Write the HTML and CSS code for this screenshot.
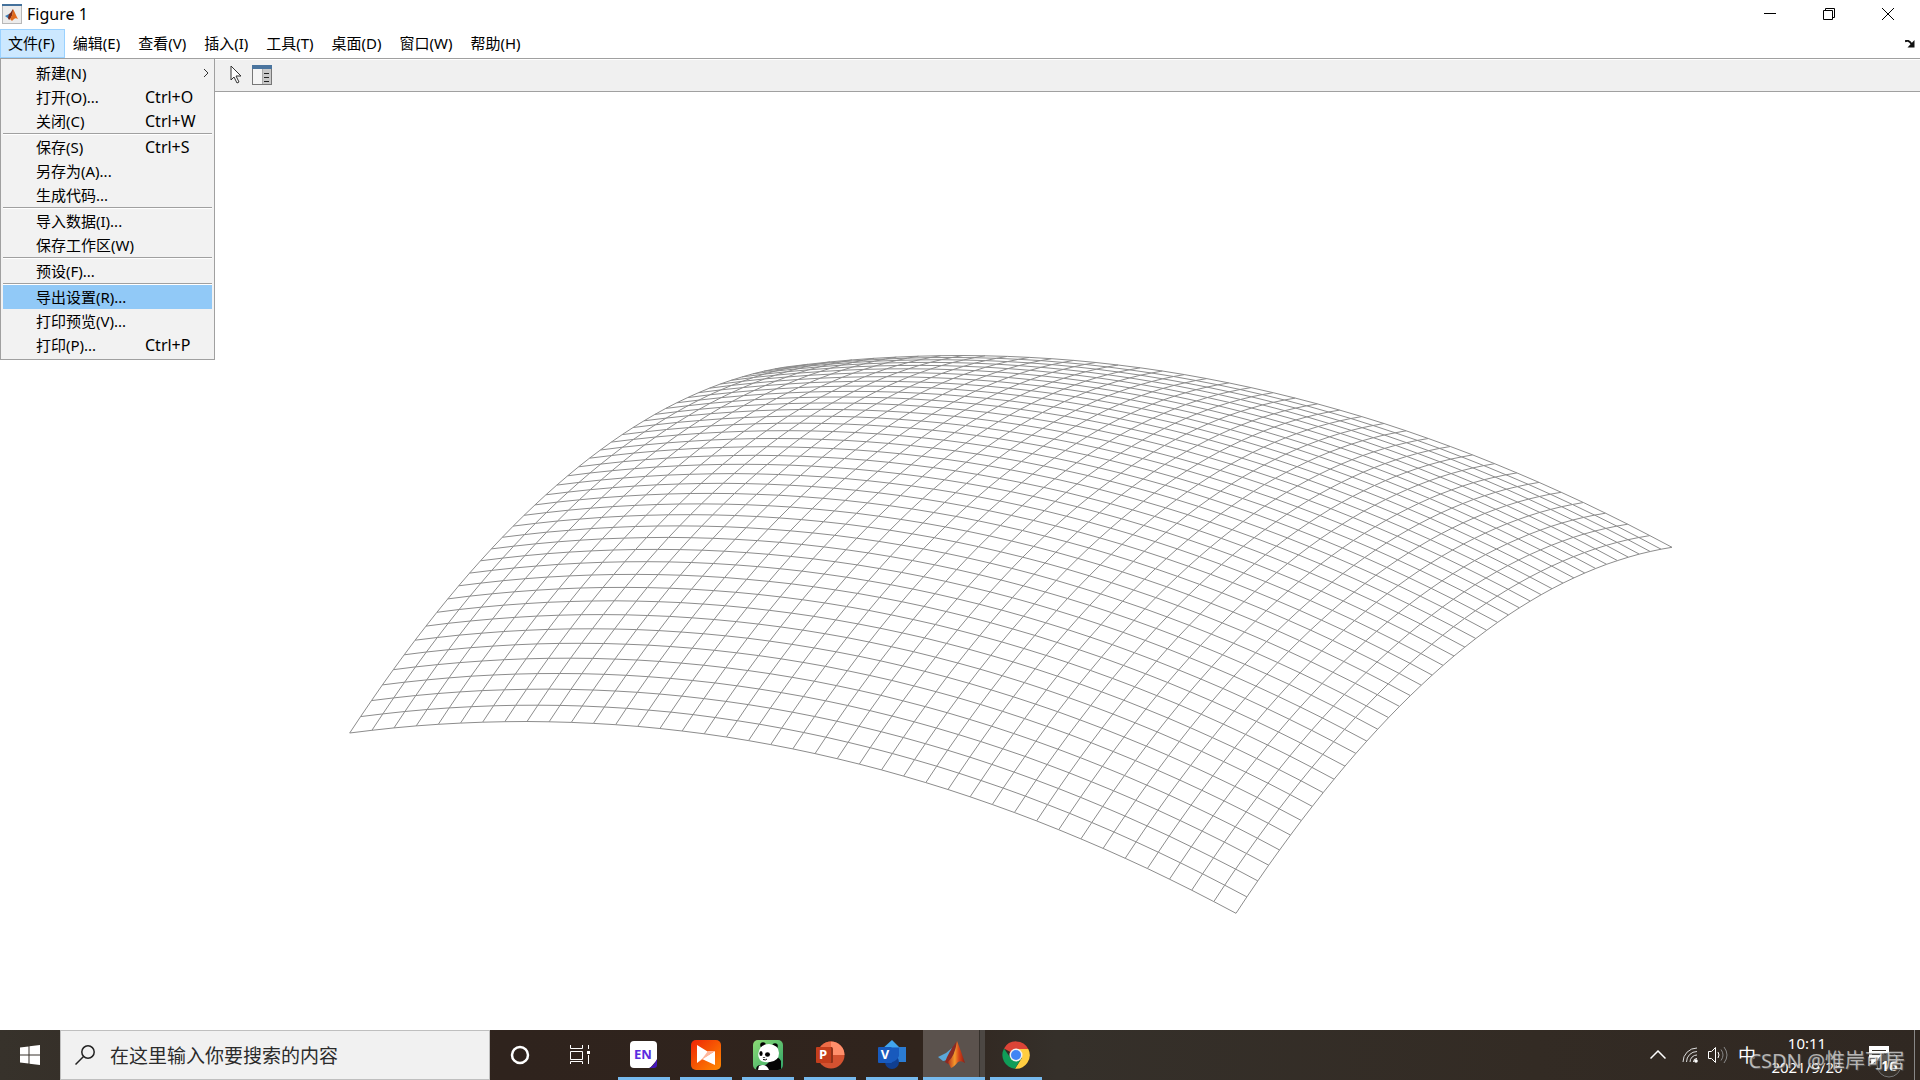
FILE: index.html
```html
<!DOCTYPE html>
<html lang="zh-CN">
<head>
<meta charset="utf-8">
<title>Figure 1</title>
<link rel="stylesheet" href="styles.css">
</head>
<body>
<div class="desktop">
  <header class="titlebar">
    <svg class="title-icon" width="20" height="20" viewBox="0 0 20 20" aria-hidden="true">
      <rect x=".5" y=".5" width="19" height="19" fill="#ececec" stroke="#b8b8b8"/>
      <rect width="20" height="2" fill="#44719b"/>
      <path d="M3 12l4-2 3 1-3 4z" fill="#3c7fb8"/>
      <path d="M7 10c2-1 3-4 4-5 0 4-1 9-4 11L6 14z" fill="#7d2a17"/>
      <path d="M11 5c2 3 3 7 5 10-3-2-4 0-6 2l-2-2c2-3 3-6 3-10z" fill="#e06a1c"/>
    </svg>
    <h1 class="title">Figure 1</h1>
    <div class="window-buttons">
      <button class="window-button" aria-label="最小化"><svg width="12" height="12"><path d="M0 5.500h12" stroke="#000"/></svg></button>
      <button class="window-button" aria-label="还原"><svg width="12" height="12" fill="none" stroke="#000"><path d="M.5 2.500h9v9h-9zM2.500 2.500v-2h9v9h-2"/></svg></button>
      <button class="window-button" aria-label="关闭"><svg width="12" height="12"><path d="M0 0l12 12M12 0L0 12" stroke="#000"/></svg></button>
    </div>
  </header>

  <nav class="menubar" aria-label="菜单栏">
    <button class="menubar-item open">文件(F)</button>
    <button class="menubar-item">编辑(E)</button>
    <button class="menubar-item">查看(V)</button>
    <button class="menubar-item">插入(I)</button>
    <button class="menubar-item">工具(T)</button>
    <button class="menubar-item">桌面(D)</button>
    <button class="menubar-item">窗口(W)</button>
    <button class="menubar-item">帮助(H)</button>
    <button class="dock-button" aria-label="停靠"><svg width="10" height="8" viewBox="0 0 10 8"><path d="M0 1.500c2-1.500 4-1 7 3" stroke="#111" stroke-width="2" fill="none"/><path d="M9.500 0v7.500H2.500z" fill="#111"/></svg></button>
  </nav>

  <div class="toolbar-row">
    <div class="toolbar">
      <button class="tool" aria-label="编辑绘图">
        <svg width="12" height="20" viewBox="0 0 12 20"><path d="M1 1v14l3-3 3 6 2-1-3-6h5z" fill="#fff" stroke="#333"/></svg>
      </button>
      <button class="tool" aria-label="属性检查器">
        <svg width="20" height="20" viewBox="0 0 20 20"><rect x=".5" y=".5" width="19" height="19" fill="#f5f5f5" stroke="#777"/><rect width="20" height="4" fill="#4a749e"/><path d="M10 4h9v15h-9z" fill="#c9c9c9"/><path d="M10.500 4v15" stroke="#aaa"/><path d="M12 8.500h5M12 12.500h5M12 16.500h5" stroke="#222"/></svg>
      </button>
    </div>
    <div class="menu" role="menu">
      <button class="menu-item" role="menuitem"><span>新建(N)</span><svg class="submenu-arrow" width="6" height="10"><path d="M1 1l4 4-4 4" fill="none" stroke="#333"/></svg></button>
      <button class="menu-item" role="menuitem"><span>打开(O)...</span><span class="shortcut">Ctrl+O</span></button>
      <button class="menu-item" role="menuitem"><span>关闭(C)</span><span class="shortcut">Ctrl+W</span></button>
      <hr class="menu-separator">
      <button class="menu-item" role="menuitem"><span>保存(S)</span><span class="shortcut">Ctrl+S</span></button>
      <button class="menu-item" role="menuitem"><span>另存为(A)...</span></button>
      <button class="menu-item" role="menuitem"><span>生成代码...</span></button>
      <hr class="menu-separator">
      <button class="menu-item" role="menuitem"><span>导入数据(I)...</span></button>
      <button class="menu-item" role="menuitem"><span>保存工作区(W)</span></button>
      <hr class="menu-separator">
      <button class="menu-item" role="menuitem"><span>预设(F)...</span></button>
      <hr class="menu-separator">
      <button class="menu-item selected" role="menuitem"><span>导出设置(R)...</span></button>
      <button class="menu-item" role="menuitem"><span>打印预览(V)...</span></button>
      <button class="menu-item" role="menuitem"><span>打印(P)...</span><span class="shortcut">Ctrl+P</span></button>
    </div>
  </div>

  <main class="figure">
    <svg class="plot" viewBox="0 92 1920 938" role="img" aria-label="曲面网格"><path id="mesh" class="mesh"/></svg>
  </main>

  <footer class="taskbar">
    <button class="start" aria-label="开始"><svg width="20" height="20" viewBox="0 0 20 20" fill="#fff"><path d="M0 2.500l8.500-1V9.500H0zM9.500 1.300L20 0v9.500H9.500zM0 10.500h8.500v8L0 17.500zM9.500 10.500H20V20l-10.500-1.300z"/></svg></button>
    <label class="search">
      <svg width="20" height="20" viewBox="0 0 20 20" fill="none" stroke="#222" stroke-width="1.500"><circle cx="13" cy="7" r="6.200"/><path d="M8.500 11.500L.5 19.500"/></svg>
      <input class="search-input" type="text" placeholder="在这里输入你要搜索的内容" aria-label="搜索">
    </label>
    <button class="shell-button" aria-label="Cortana"><svg width="20" height="20"><circle cx="10" cy="10" r="8" fill="none" stroke="#fff" stroke-width="2.500"/></svg></button>
    <button class="shell-button" aria-label="任务视图"><svg width="20" height="20" viewBox="0 0 20 20" fill="none" stroke="#fff"><path d="M.5 0v3.500h12V0M.5 6.500h12v8H.5zM.5 19v-2.500h12V19M18.500 0v4M18.500 10v9"/><path d="M17 6h3v3h-3z" fill="#fff" stroke="none"/></svg></button>
    <div class="apps">
      <button class="app" aria-label="EN">
        <svg width="30" height="30" viewBox="0 0 30 30"><path d="M5 1h19q4 0 4 4v15l-7 8H5q-4 0-4-4V5q0-4 4-4z" fill="#fff"/><path d="M28 19v6q0 3-3 3h-5q5-2 8-9z" fill="#4316b8"/><text x="14" y="19" class="icon-text en">EN</text></svg>
      </button>
      <button class="app" aria-label="视频">
        <svg width="30" height="30" viewBox="0 0 30 30"><defs><linearGradient id="orange" x2="1" y2="1"><stop stop-color="#ee2506"/><stop offset="1" stop-color="#ff8a00"/></linearGradient></defs><rect width="30" height="30" rx="5" fill="url(#orange)"/><path d="M6 5l13 8-13 10z" fill="#fff"/><path d="M24 11v14L11 19z" fill="#fff"/><path d="M24 11l-18 12 5-4 6-8z" fill="#ffb79c"/></svg>
      </button>
      <button class="app" aria-label="熊猫">
        <svg width="30" height="30" viewBox="0 0 30 30"><defs><linearGradient id="green" x2="1" y2="1"><stop stop-color="#8ddc75"/><stop offset="1" stop-color="#31a368"/></linearGradient><clipPath id="tile"><rect width="30" height="30" rx="5"/></clipPath></defs><g clip-path="url(#tile)"><rect width="30" height="30" fill="url(#green)"/><path d="M17 17q8-2 11 4v9H3q0-5 5-5 8 2 9-8z" fill="#050505"/><circle cx="10" cy="5" r="2.800"/><circle cx="22" cy="6" r="2.800"/><path d="M6 11q2-7 10-7 10 1 10 9 0 8-9 9-7 1-10-2-3-4-1-9z" fill="#fff"/><ellipse cx="8" cy="13.500" rx="1.600" ry="2.500"/><ellipse cx="14.500" cy="14.500" rx="2.500" ry="2.300"/><path d="M9.500 17h3l-1.500 1z" fill="#000"/><path d="M10 19.500q3 1 4-.5" stroke="#000" fill="none"/><path d="M6 26q7-3 10 4H5z" fill="#fff"/></g></svg>
      </button>
      <button class="app" aria-label="PowerPoint">
        <svg width="30" height="30" viewBox="0 0 30 30"><circle cx="16" cy="15" r="13.500" fill="#d35230"/><path d="M16 1.500V15H2.500A13.500 13.500 0 0 1 16 1.500z" fill="#ed6c47"/><path d="M16 1.500A13.500 13.500 0 0 1 29.500 15H16z" fill="#ff8f6b"/><path d="M15 7h2q1 1 1 2v13q0 1-1 1h-2z" fill="#8f3219"/><rect x="1" y="7" width="15" height="16" rx="1" fill="#c43e1c"/><text x="8" y="19" class="icon-text">P</text></svg>
      </button>
      <button class="app" aria-label="Visio">
        <svg width="30" height="30" viewBox="0 0 30 30"><path d="M15 0l9 9-9 9-10-9z" fill="#41a5ee"/><rect x="15" y="7" width="14" height="15" fill="#2b7cd3"/><circle cx="15" cy="22" r="7" fill="#103f91"/><path d="M10 8h12v8q-3 7-12 7z" fill="#185abd"/><rect x="1" y="7" width="14" height="16" rx="1" fill="#185abd"/><text x="8" y="19" class="icon-text">V</text></svg>
      </button>
      <button class="app active" aria-label="MATLAB">
        <svg width="30" height="30" viewBox="0 0 30 30"><defs><linearGradient id="flame" x2="1"><stop stop-color="#b8321a"/><stop offset=".4" stop-color="#f59a2c"/><stop offset=".65" stop-color="#d74419"/><stop offset="1" stop-color="#8b1c12"/></linearGradient></defs><path d="M1 17l8-4 6-5-4 12-5 1z" fill="#5aa7da"/><path d="M8 22q3-9 12-21-2 13-7 21l-2 2z" fill="#8c2a24"/><path d="M20 1q4 10 8 22-4-3-7-1-4 5-7 6l-3-6q7-6 9-21z" fill="url(#flame)"/></svg>
      </button>
      <button class="app" aria-label="Chrome">
        <svg width="30" height="30" viewBox="0 0 30 30"><path d="M15 15L3 8.500A13.700 13.700 0 0 1 27.300 9H15z" fill="#db4437"/><path d="M15 15V9h12.300A13.700 13.700 0 0 1 14 28.700l7-11z" fill="#ffcd40"/><path d="M15 15l5.500 3-6.500 10.700A13.700 13.700 0 0 1 3 8.500L9.500 18z" fill="#0f9d58"/><circle cx="15" cy="15" r="6.500" fill="#f1f1f1"/><circle cx="15" cy="15" r="5" fill="#4285f4"/></svg>
      </button>
    </div>
    <div class="tray">
      <svg class="tray-up" width="16" height="10" viewBox="0 0 16 10"><path d="M.5 8.500L8 1l7.500 7.500" fill="none" stroke="#fff" stroke-width="1.500"/></svg>
      <svg width="16" height="16" viewBox="0 0 16 16" fill="none"><path d="M1 15A14 14 0 0 1 15 1M4.500 15A10.500 10.500 0 0 1 15 4.500M8 15a7 7 0 0 1 7-7" stroke="#ddd"/><path d="M11.500 15a3.500 3.500 0 0 1 3.500-3.500" stroke="#fff"/><circle cx="14" cy="14" r="1.800" fill="#fff"/></svg>
      <svg width="20" height="18" viewBox="0 0 20 18" fill="none"><path d="M.5 5.500h3l4-4v15l-4-4h-3z" stroke="#fff"/><path d="M10 6q2 3 0 6" stroke="#fff"/><path d="M13 3.500q4 5.500 0 11M16 1q6 8 0 16" stroke="#888"/></svg>
      <span class="ime">中</span>
      <time class="clock"><span>10:11</span><span>2021/9/26</span></time>
      <button class="notices" aria-label="通知">
        <svg width="34" height="34" viewBox="0 0 34 34"><path d="M1 2h20v15H8l-5 4v-4H1z" fill="#fff"/><path d="M4 6.500h14M4 10.500h14" stroke="#332c25"/><circle cx="21" cy="21" r="12" fill="#39332d" fill-opacity=".8" stroke="#777"/><text x="21" y="27" class="badge-text">16</text></svg>
      </button>
      <span class="watermark">CSDN @惟岸可居</span>
    </div>
  </footer>
</div>
<script src="mesh.js"></script>
</body>
</html>
```
FILE: mesh.js
```js
// Paraboloid sampled on a 40 x 40 grid, seen in orthographic projection.
const N = 40;
const point = (i, j) => {
  const u = i / N, v = j / N;
  const x = 349.7 + 886.3 * u + 436 * v;
  const y = 733 + 180.3 * u - 366 * v - 297 * (u * (1 - u) + v * (1 - v));
  return x.toFixed(1) + ' ' + y.toFixed(1);
};
const lines = [];
for (let a = 0; a <= N; a++) {
  const along = [], across = [];
  for (let b = 0; b <= N; b++) {
    along.push(point(b, a));
    across.push(point(a, b));
  }
  lines.push('M' + along.join('L'), 'M' + across.join('L'));
}
document.getElementById('mesh').setAttribute('d', lines.join(''));
```
FILE: styles.css
```css
* { box-sizing: border-box; }
body {
  margin: 0;
  background: #fff;
  color: #000;
  font: 15px/20px "Noto Sans", "Noto Sans CJK SC", sans-serif;
}
button {
  margin: 0;
  padding: 0;
  border: 0;
  background: none;
  color: inherit;
  font: inherit;
}
svg { display: block; flex: none; }

.desktop { display: flex; flex-direction: column; min-height: 100vh; }

.titlebar { display: flex; align-items: center; height: 29px; padding: 0 3px 1px 2px; gap: 5px; }
.title { margin: 0; padding-bottom: 1px; font-size: 16px; font-weight: 400; }
.window-buttons { display: flex; margin-left: auto; align-self: stretch; }
.window-button { display: flex; align-items: center; justify-content: center; width: 59px; }

.menubar { display: flex; height: 29px; }
.menubar-item { padding: 0 9px 2px 7px; border: 1px solid transparent; }
.menubar-item.open { background: #cce8ff; border-color: #99d1ff; }
.dock-button { margin-left: auto; padding: 0 5px; }

.toolbar-row { position: relative; }
.toolbar {
  display: flex;
  align-items: center;
  gap: 10px;
  height: 34px;
  padding: 0 0 1px 230px;
  border: solid #a0a0a0;
  border-width: 1px 0;
  background: #f0f0f0;
  box-shadow: inset 0 1px #fff;
}
.menu {
  position: absolute;
  top: 0;
  left: 0;
  width: 215px;
  padding: 2px;
  border: 1px solid #a0a0a0;
  background: #f2f2f2;
}
.menu-item {
  display: grid;
  grid-template-columns: 109px 1fr;
  align-items: center;
  width: 100%;
  height: 24px;
  padding: 0 0 1px 33px;
  text-align: left;
}
.menu-item.selected { background: #91c9f7; }
.shortcut { font-size: 16px; }
.submenu-arrow { justify-self: end; margin-right: 3px; }
.menu-separator { height: 2px; margin: 0; border: 0; border-top: 1px solid #a0a0a0; background: #fff; }

.figure { flex: 1; display: flex; min-height: 0; }
.plot { width: 100%; height: calc(100vh - 142px); }
.mesh { fill: none; stroke: #8c8c8c; stroke-width: 1; }

.taskbar {
  display: flex;
  height: 50px;
  background: linear-gradient(90deg, #37322b, #2f231d 26%, #30241d 48%, #35302a 55%, #332b24 80%, #302822);
  color: #fff;
}
.start { display: flex; align-items: center; justify-content: center; width: 60px; }
.search {
  display: flex;
  align-items: center;
  gap: 15px;
  width: 430px;
  padding-left: 14px;
  border: 1px solid #bfbfbf;
  background: #f1f1f1;
}
.search-input {
  flex: 1;
  min-width: 0;
  padding: 0;
  border: 0;
  outline: 0;
  background: none;
  font: 19px/28px "Noto Sans CJK SC", sans-serif;
}
.search-input::placeholder { color: #2b2b2b; opacity: 1; }
.shell-button { display: flex; align-items: center; justify-content: center; width: 60px; }
.apps { display: flex; margin-left: 3px; }
.app {
  display: flex;
  align-items: center;
  justify-content: center;
  width: 52px;
  margin: 0 5px;
  border: solid transparent;
  border-width: 3px 0;
  border-bottom-color: #76b9ed;
}
.app.active {
  width: 62px;
  margin: 0;
  border-top: 0;
  padding: 3px 4px 0 0;
  background: linear-gradient(90deg, #5b524d 56px, #35302b 56px, #35302b 57px, #4c4743 57px);
}
.icon-text { fill: #fff; font: 700 13px "Open Sans", sans-serif; text-anchor: middle; }
.icon-text.en { fill: #5b2de0; }
.badge-text { fill: #fff; font: 700 15px "Noto Sans", sans-serif; text-anchor: middle; }

.tray {
  position: relative;
  display: flex;
  align-items: center;
  gap: 10px;
  margin-left: auto;
  margin-right: 5px;
  padding-right: 12px;
  border-right: 1px solid #888;
}
.tray-up { margin-right: 6px; }
.ime { font-size: 18px; line-height: 24px; }
.clock { display: flex; flex-direction: column; align-items: center; width: 82px; margin-right: 10px; line-height: 24px; }
.notices { padding-top: 12px; }
.watermark {
  position: absolute;
  right: 9px;
  top: 16px;
  font-size: 20px;
  line-height: 30px;
  color: #ffffffa0;
  white-space: nowrap;
  text-shadow: 1px 1px 1px #555;
}
```
